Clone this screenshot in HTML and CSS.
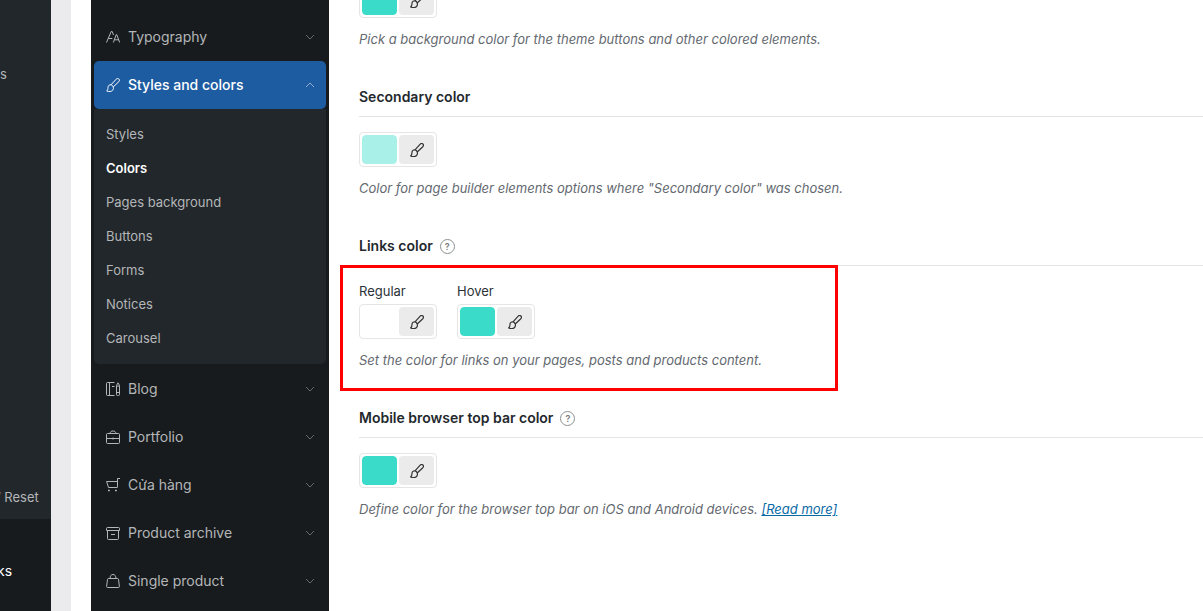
FILE: index.html
```
<!DOCTYPE html>
<html lang="en">
<head>
<meta charset="utf-8">
<title>Theme settings</title>
<link rel="stylesheet" href="styles.css">
</head>
<body>
	<svg class="sprite" aria-hidden="true">
		<symbol id="i-brush" viewBox="0 0 14 14">
			<path d="M5 6.800 10.200 1.200c.8-.8 1.900-.9 2.700-.2s.7 1.900-.1 2.700L7.200 9M5 6.800c-1.700-.2-3 .9-3 2.700 0 1.500-.3 2.500-1.300 3.500 2.300.9 5 .7 6.100-.9.700-1 .800-2.100.4-3.100-.4-1.200-1.100-2-2.200-2.200z"/>
		</symbol>
		<symbol id="i-down" viewBox="0 0 10 6">
			<path d="M1 1l4 4 4-4"/>
		</symbol>
		<symbol id="i-up" viewBox="0 0 10 6">
			<path d="M1 5l4-4 4 4"/>
		</symbol>
	</svg>

	<div class="page">
		<nav class="admin-menu">
			<ul class="admin-sub">
				<li><a href="#">s</a></li>
				<li><a href="#">/ Reset</a></li>
			</ul>
			<a class="admin-top" href="#">ks</a>
		</nav>

		<div class="panel">
			<nav class="sidebar">
				<a class="nav-item" href="#">
					<svg class="icon" viewBox="0 0 14 14"><path d="M.5 12.500 5.200 1.500h1L7.500 5M2.300 8.500h4M7.300 12.500 10.300 4.500h.4l3 8M8.400 9.800h4.300"/></svg>
					Typography
					<svg class="arrow"><use href="#i-down"/></svg>
				</a>
				<a class="nav-item active" href="#">
					<svg class="icon"><use href="#i-brush"/></svg>
					Styles and colors
					<svg class="arrow"><use href="#i-up"/></svg>
				</a>
				<ul class="sub-menu">
					<li><a href="#">Styles</a></li>
					<li><a class="current" href="#">Colors</a></li>
					<li><a href="#">Pages background</a></li>
					<li><a href="#">Buttons</a></li>
					<li><a href="#">Forms</a></li>
					<li><a href="#">Notices</a></li>
					<li><a href="#">Carousel</a></li>
				</ul>
				<a class="nav-item" href="#">
					<svg class="icon" viewBox="0 0 14 14"><path d="M8.500.5h-7a1 1 0 0 0-1 1v11a1 1 0 0 0 1 1h7M3.500.5v13M6 4.500h2.500M10.500 3.500 12 .8l1.500 2.700v9a1 1 0 0 1-1 1h-1a1 1 0 0 1-1-1zM10.500 4h3M10.500 10.500h3"/></svg>
					Blog
					<svg class="arrow"><use href="#i-down"/></svg>
				</a>
				<a class="nav-item" href="#">
					<svg class="icon" viewBox="0 0 14 14"><path d="M1.500 3.500h11a1 1 0 0 1 1 1v8a1 1 0 0 1-1 1h-11a1 1 0 0 1-1-1v-8a1 1 0 0 1 1-1zM4 3.500c.3-1.800 1.300-2.500 3-2.500s2.700.7 3 2.500M.5 8.500h13M7 7.500v2"/></svg>
					Portfolio
					<svg class="arrow"><use href="#i-down"/></svg>
				</a>
				<a class="nav-item" href="#">
					<svg class="icon" viewBox="0 0 14 14"><path d="M14 .5h-2.500v8.300l-.9.700H2.500L.6 3.500h10.900M11.500 9.500h-2"/><path d="M2 12.500h1.800M9 12.500h1.800" stroke-width="1.600"/></svg>
					Cửa hàng
					<svg class="arrow"><use href="#i-down"/></svg>
				</a>
				<a class="nav-item" href="#">
					<svg class="icon" viewBox="0 0 14 14"><path d="M1.500 1.500h11a1 1 0 0 1 1 1v2h-13v-2a1 1 0 0 1 1-1zM1.500 4.500v8a1 1 0 0 0 1 1h9a1 1 0 0 0 1-1v-8M5 8.500h4"/></svg>
					Product archive
					<svg class="arrow"><use href="#i-down"/></svg>
				</a>
				<a class="nav-item" href="#">
					<svg class="icon" viewBox="0 0 14 14"><path d="M2.500 4.500h9a1 1 0 0 1 1 .8l.9 7.200a1 1 0 0 1-1 1H1.600a1 1 0 0 1-1-1l.9-7.200a1 1 0 0 1 1-.8zM4 4.500c.2-2.600 1-4 3-4s2.800 1.400 3 4"/></svg>
					Single product
					<svg class="arrow"><use href="#i-down"/></svg>
				</a>
			</nav>

			<main class="content">
				<section class="field">
					<div class="picker">
						<input type="color" value="#3adcc9" aria-label="Primary color">
						<button type="button" aria-label="Select color"><svg class="icon"><use href="#i-brush"/></svg></button>
					</div>
					<p class="desc">Pick a background color for the theme buttons and other colored elements.</p>
				</section>

				<section class="field">
					<h2 class="title">Secondary color</h2>
					<div class="picker">
						<input type="color" value="#a9f1e8" aria-label="Secondary color">
						<button type="button" aria-label="Select color"><svg class="icon"><use href="#i-brush"/></svg></button>
					</div>
					<p class="desc">Color for page builder elements options where "Secondary color" was chosen.</p>
				</section>

				<section class="field marked">
					<h2 class="title">Links color <span class="help">?</span></h2>
					<div class="pickers">
						<div>
							<label for="link-regular">Regular</label>
							<div class="picker">
								<input type="color" id="link-regular" value="#ffffff">
								<button type="button" aria-label="Select color"><svg class="icon"><use href="#i-brush"/></svg></button>
							</div>
						</div>
						<div>
							<label for="link-hover">Hover</label>
							<div class="picker">
								<input type="color" id="link-hover" value="#3adcc9">
								<button type="button" aria-label="Select color"><svg class="icon"><use href="#i-brush"/></svg></button>
							</div>
						</div>
					</div>
					<p class="desc">Set the color for links on your pages, posts and products content.</p>
				</section>

				<section class="field">
					<h2 class="title">Mobile browser top bar color <span class="help">?</span></h2>
					<div class="picker">
						<input type="color" value="#3adcc9" aria-label="Mobile browser top bar color">
						<button type="button" aria-label="Select color"><svg class="icon"><use href="#i-brush"/></svg></button>
					</div>
					<p class="desc">Define color for the browser top bar on iOS and Android devices. <a href="#">[Read more]</a></p>
				</section>
			</main>
		</div>
	</div>
</body>
</html>
```

FILE: styles.css
```
*,
*::after {
	box-sizing: border-box;
	margin: 0;
	padding: 0;
}

body {
	background: #ebebed;
	font-family: Inter, "Liberation Sans", sans-serif;
	font-size: 13px;
	line-height: 20px;
	color: #2c3338;
	overflow: hidden;
}

ul {
	list-style: none;
}

a {
	text-decoration: none;
}

.sprite {
	display: none;
}

.page {
	display: flex;
	min-height: 100vh;
}

/* admin menu */
.admin-menu {
	width: 51px;
	flex: none;
	background: #171b1e;
	white-space: nowrap;
	overflow: hidden;
}

.admin-menu a {
	display: block;
	color: #b4b6b8;
}

.admin-sub {
	height: 519px;
	padding: 64px 0 12px;
	background: #22272b;
	display: flex;
	flex-direction: column;
	justify-content: space-between;
}

.admin-sub li:last-child {
	margin-left: -4px;
}

.admin-menu .admin-top {
	margin: 42px 0 0 -3px;
	font-size: 14px;
	color: #fff;
}

/* settings panel */
.panel {
	flex: 1;
	min-width: 0;
	display: flex;
	margin-left: 20px;
	padding-left: 20px;
	background: #fff;
}

.sidebar {
	width: 238px;
	flex: none;
	padding: 13px 3px 0;
	background: #171b1e;
}

.nav-item {
	display: flex;
	align-items: center;
	gap: 8px;
	height: 48px;
	padding: 0 11px 0 12px;
	border-radius: 5px;
	font-size: 14px;
	color: #b4b6b8;
}

.icon {
	width: 14px;
	height: 14px;
	flex: none;
	fill: none;
	stroke: currentColor;
	stroke-width: 1;
}

.arrow {
	width: 10px;
	height: 6px;
	margin-left: auto;
	fill: none;
	stroke: currentColor;
	opacity: .5;
}

.nav-item.active {
	background: #1e5ca2;
	color: #fff;
	font-weight: 500;
}

.sub-menu {
	margin-bottom: 1px;
	padding: 8px 12px 9px;
	background: #22272b;
	border-radius: 0 0 5px 5px;
}

.sub-menu a {
	display: block;
	line-height: 34px;
	color: #b4b6b8;
}

.sub-menu .current {
	color: #fff;
	font-weight: 600;
}

/* options */
.content {
	flex: 1;
	min-width: 0;
	margin-top: -17px;
	padding-left: 30px;
}

.field {
	margin-bottom: 38px;
}

.title {
	display: flex;
	align-items: center;
	gap: 7px;
	height: 30px;
	margin-bottom: 15px;
	padding-bottom: 9px;
	border-bottom: 1px solid #e3e4e5;
	font-size: 14px;
	font-weight: 600;
	color: #23282d;
}

.help {
	width: 15px;
	height: 15px;
	border: 1px solid #8c8f92;
	border-radius: 50%;
	font-size: 9px;
	line-height: 13px;
	text-align: center;
	color: #777a7d;
}

.pickers {
	display: flex;
	gap: 20px;
}

.pickers label {
	display: block;
	margin-bottom: 3px;
}

.picker {
	display: flex;
	gap: 2px;
	width: 78px;
	padding: 2px;
	border: 1px solid #e5e5e6;
	border-radius: 4px;
}

.picker input,
.picker button {
	width: 35px;
	height: 29px;
	border: 0;
	border-radius: 4px;
}

.picker input {
	appearance: none;
	background: none;
}

.picker input::-webkit-color-swatch-wrapper {
	padding: 0;
}

.picker input::-webkit-color-swatch {
	border: 0;
	border-radius: 4px;
}

.picker button {
	display: flex;
	align-items: center;
	justify-content: center;
	background: #ebebeb;
	color: #333;
}

.picker .icon {
	stroke-width: 1.2;
}

.desc {
	margin-top: 11px;
	font-style: italic;
	color: #646970;
}

.desc a {
	color: #0a6aa6;
	text-decoration: underline;
}

/* frame round the links colors */
.marked {
	position: relative;
}

.marked::after {
	content: "";
	position: absolute;
	top: 29px;
	left: -19px;
	width: 498px;
	height: 126px;
	border: 3px solid #fe0000;
	pointer-events: none;
}
```
